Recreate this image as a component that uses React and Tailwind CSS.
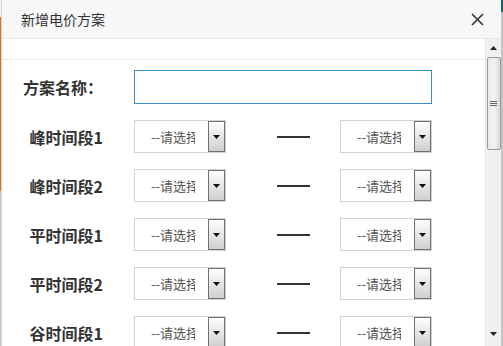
import React from 'react';

const rows = ['峰时间段1', '峰时间段2', '平时间段1', '平时间段2', '谷时间段1'];

function Select() {
  return (
    <div className="relative w-[92px] h-[33px] border border-[#d2d2da] bg-white flex items-center">
      <div className="ml-[16px] w-[44px] overflow-hidden whitespace-nowrap text-[13px] text-[#555]">--请选择</div>
      <div className="absolute right-0 top-0 bottom-0 w-[17px] border border-[#707070] bg-gradient-to-b from-white to-[#cfcfcf] flex items-center justify-center">
        <svg width="7" height="4" viewBox="0 0 7 4"><path d="M0 0h7L3.5 4z" fill="#111" /></svg>
      </div>
    </div>
  );
}

export default function App() {
  return (
    <div className="flex h-[346px] w-[503px] overflow-hidden bg-white" style={{ fontFamily: '"Noto Sans CJK SC", "Liberation Sans", sans-serif' }}>
      {/* page behind, left */}
      <div className="w-[1px] flex flex-col">
        <div className="h-[17px] bg-[#f4f4f4]" />
        <div className="h-[174px] bg-[#e0701a]" />
        <div className="flex-1 bg-[#c8c8c8]" />
      </div>

      {/* dialog */}
      <div className="flex-1 flex flex-col border-l border-[#d6d6d6]">
        <div className="h-[39px] shrink-0 bg-[#f7f7f7] border-b border-[#e6e6e6] flex items-center justify-between pl-[19px] pr-[17px]">
          <span className="text-[14px] text-[#333]">新增电价方案</span>
          <svg width="13" height="13" viewBox="0 0 13 13"><path d="M1 1l11 11M12 1L1 12" stroke="#333" strokeWidth="1.6" /></svg>
        </div>

        <div className="flex-1 flex min-h-0">
          <div className="flex-1 flex flex-col overflow-hidden">
            <div className="h-[21px] shrink-0 border-b border-[#ececec]" />
            <div className="flex shrink-0 items-center mt-[10px]">
              <div className="w-[101px] text-right text-[16px] font-bold text-[#333]">方案名称：</div>
              <div className="ml-[31px] w-[298px] h-[34px] border border-[#3a8cc6]" />
            </div>
            {rows.map((r) => (
              <div key={r} className="flex shrink-0 items-center mt-[16px]">
                <div className="w-[101px] text-right text-[16px] font-bold text-[#333]">{r}</div>
                <div className="ml-[31px]"><Select /></div>
                <div className="ml-[51px] w-[33px] h-[2px] bg-[#333]" />
                <div className="ml-[30px]"><Select /></div>
              </div>
            ))}
          </div>

          {/* scrollbar */}
          <div className="w-[16px] bg-[#f0f0f0] border-l border-[#e6e6e6] flex flex-col items-center">
            <div className="h-[18px] flex items-center justify-center">
              <svg width="7" height="4" viewBox="0 0 7 4"><path d="M0 4h7L3.5 0z" fill="#222" /></svg>
            </div>
            <div className="w-[14px] h-[93px] border border-[#9a9a9a] rounded-[2px] bg-gradient-to-r from-[#e8e8e8] via-[#f4f4f4] to-[#d8d8d8] flex flex-col items-center justify-center gap-[1px]">
              <div className="w-[7px] h-[1px] bg-[#666]" />
              <div className="w-[7px] h-[1px] bg-[#666]" />
              <div className="w-[7px] h-[1px] bg-[#666]" />
            </div>
            <div className="flex-1" />
            <div className="h-[16px] flex items-start justify-center pt-[2px]">
              <svg width="7" height="4" viewBox="0 0 7 4"><path d="M0 0h7L3.5 4z" fill="#222" /></svg>
            </div>
          </div>
        </div>
      </div>

      {/* page behind, right */}
      <div className="w-[2px] flex flex-col">
        <div className="h-[12px] bg-[#0d6b62]" />
        <div className="flex-1 bg-[#c4c4c4]" />
      </div>
    </div>
  );
}
